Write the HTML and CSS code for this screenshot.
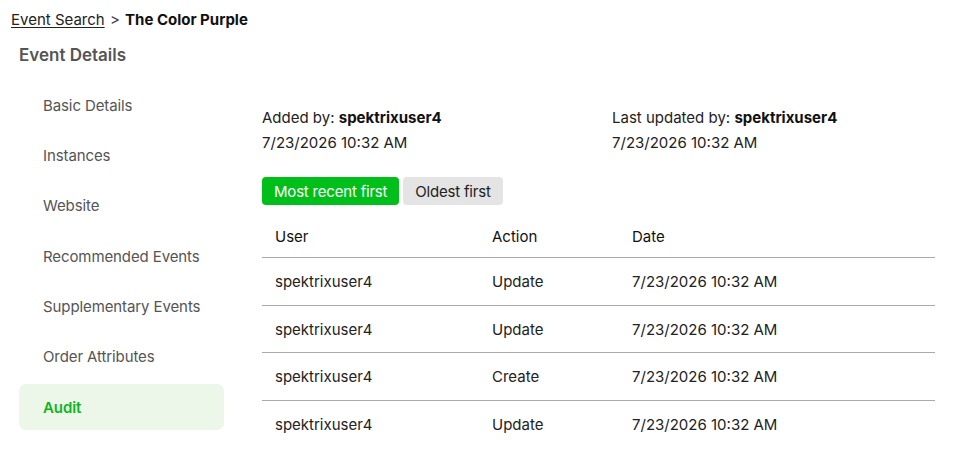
FILE: index.html
```html
<!DOCTYPE html>
<html lang="en">
<head>
<meta charset="utf-8">
<title>The Color Purple – Audit</title>
<link rel="stylesheet" href="styles.css">
</head>
<body>
  <nav class="breadcrumb">
    <a href="#" class="crumb-link">Event Search</a>
    <span class="crumb-sep">&gt;</span>
    <strong class="crumb-current">The Color Purple</strong>
  </nav>

  <h1 class="page-title">Event Details</h1>

  <div class="layout">
    <ul class="side-nav">
      <li class="side-item">Basic Details</li>
      <li class="side-item">Instances</li>
      <li class="side-item">Website</li>
      <li class="side-item">Recommended Events</li>
      <li class="side-item">Supplementary Events</li>
      <li class="side-item">Order Attributes</li>
      <li class="side-item is-active">Audit</li>
    </ul>

    <main class="audit">
      <div class="meta">
        <div class="meta-col">
          <div>Added by: <b>spektrixuser4</b></div>
          <div>7/23/2026 10:32 AM</div>
        </div>
        <div class="meta-col">
          <div>Last updated by: <b>spektrixuser4</b></div>
          <div>7/23/2026 10:32 AM</div>
        </div>
      </div>

      <div class="sort">
        <button class="sort-btn is-selected">Most recent first</button>
        <button class="sort-btn">Oldest first</button>
      </div>

      <div class="audit-table">
        <div class="row head">
          <div class="cell">User</div>
          <div class="cell">Action</div>
          <div class="cell">Date</div>
        </div>
        <div class="row">
          <div class="cell">spektrixuser4</div>
          <div class="cell">Update</div>
          <div class="cell">7/23/2026 10:32 AM</div>
        </div>
        <div class="row">
          <div class="cell">spektrixuser4</div>
          <div class="cell">Update</div>
          <div class="cell">7/23/2026 10:32 AM</div>
        </div>
        <div class="row">
          <div class="cell">spektrixuser4</div>
          <div class="cell">Create</div>
          <div class="cell">7/23/2026 10:32 AM</div>
        </div>
        <div class="row">
          <div class="cell">spektrixuser4</div>
          <div class="cell">Update</div>
          <div class="cell">7/23/2026 10:32 AM</div>
        </div>
      </div>
    </main>
  </div>
</body>
</html>
```

FILE: styles.css
```css
* {
  box-sizing: border-box;
}

body {
  margin: 0;
  font-family: "Inter", "Noto Sans", sans-serif;
  font-size: 15px;
  color: #222;
  background: #fff;
}

/* breadcrumb */
.breadcrumb {
  padding: 9px 0 0 11px;
  line-height: 22px;
  font-size: 15px;
}

.crumb-link {
  color: #222;
  text-decoration: underline;
  text-underline-offset: 2px;
}

.crumb-sep {
  color: #444;
  margin: 0 1px;
}

.crumb-current {
  font-weight: 700;
  color: #111;
}

.page-title {
  margin: 12px 0 0 19px;
  font-size: 17px;
  line-height: 24px;
  font-weight: 600;
  color: #555;
}

/* two-column body */
.layout {
  display: flex;
  margin: 15px 0 0 19px;
}

.side-nav {
  list-style: none;
  margin: 0;
  padding: 0;
  width: 205px;
  flex-shrink: 0;
  display: flex;
  flex-direction: column;
  gap: 4.4px;
}

.side-item {
  height: 46px;
  display: flex;
  align-items: center;
  padding-left: 24px;
  border-radius: 7px;
  color: #555;
  letter-spacing: -0.1px;
}

.side-item.is-active {
  background: #ecf7ea;
  color: #0cb51b;
  font-weight: 600;
}

/* audit panel */
.audit {
  margin-left: 38px;
  width: 673px;
  padding-top: 23px;
}

.meta {
  display: flex;
  line-height: 25px;
}

.meta-col {
  flex: 0 0 350px;
}

.meta-col + .meta-col {
  flex: 1 1 auto;
}

.meta b {
  font-weight: 700;
  color: #111;
}

.sort {
  display: flex;
  gap: 4px;
  margin-top: 22px;
}

.sort-btn {
  height: 28px;
  padding: 0 12px;
  border: none;
  border-radius: 4px;
  font: inherit;
  font-size: 15px;
  letter-spacing: -0.2px;
  background: #e4e4e4;
  color: #222;
}

.sort-btn.is-selected {
  background: #00bf1a;
  color: #fff;
}

.audit-table {
  margin-top: 8px;
}

.row {
  display: grid;
  grid-template-columns: 217px 140px 1fr;
  height: 47.7px;
  align-items: center;
  border-bottom: 1px solid #aaa;
}

.row:last-child {
  border-bottom: none;
}

.row.head {
  height: 45px;
  padding-top: 3px;
  color: #111;
}

.cell {
  padding-left: 13px;
}
```
